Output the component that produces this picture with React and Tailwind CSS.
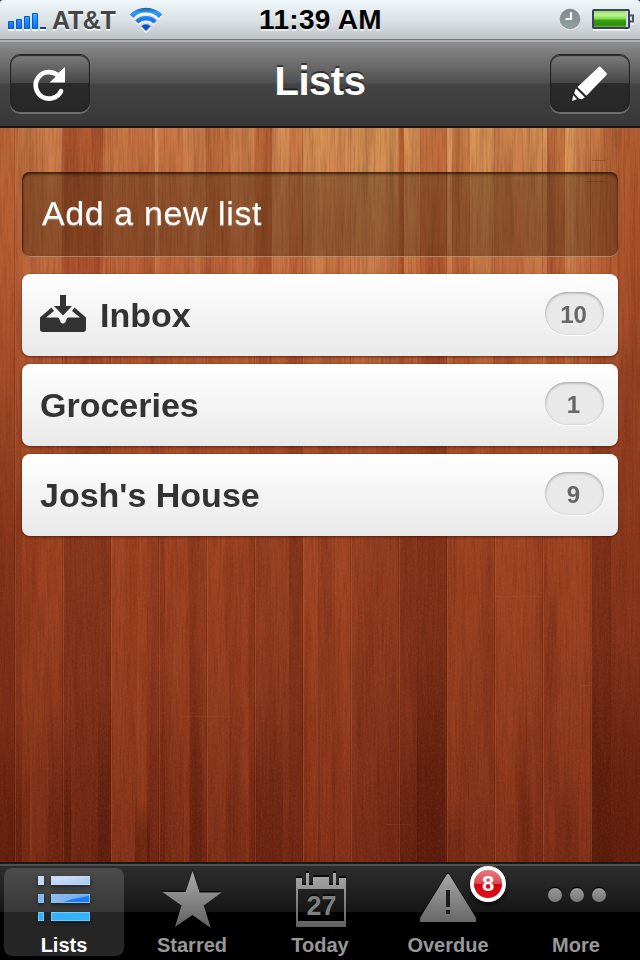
import React from "react";

// Wood strips: x, width, colour, opacity
const upperStrips = [
  [0, 15, "#a8481e", 0.3], [15, 7, "#a8481e", 0.1], [63, 40, "#8f2f12", 0.48], [103, 25, "#8f2f12", 0.12],
  [128, 27, "#8f2f12", 0.18], [155, 4, "#f4b67a", 0.35], [159, 24, "#a03a14", 0.16], [195, 12, "#f0b070", 0.12],
  [207, 24, "#a03a14", 0.22], [231, 24, "#f0b070", 0.06], [255, 17, "#a03a14", 0.38], [272, 17, "#f0b070", 0.18],
  [289, 14, "#a03a14", 0.15], [303, 20, "#e8b468", 0.34], [323, 28, "#e8b468", 0.16], [351, 5, "#f0be78", 0.26],
  [356, 24, "#e8b468", 0.36], [380, 19, "#e8b468", 0.24], [399, 5, "#97360f", 0.5], [404, 16, "#e8b468", 0.2],
  [420, 27, "#97360f", 0.3], [447, 5, "#f0be78", 0.42], [452, 18, "#97360f", 0.14], [470, 25, "#e8b468", 0.36],
  [495, 30, "#e8b468", 0.03], [525, 18, "#e8b468", 0.24], [543, 4, "#f0be78", 0.38], [547, 18, "#97360f", 0.22],
  [565, 11, "#f0be78", 0.34], [576, 16, "#e8b468", 0.08], [592, 8, "#97360f", 0.08], [600, 18, "#97360f", 0.2],
  [618, 22, "#97360f", 0.38],
];
const lowerStrips = [
  [0, 15, "#54180a", 0.22], [15, 7, "#54180a", 0.12], [22, 10, "#c5582a", 0.2], [32, 30, "#c5582a", 0.06],
  [63, 12, "#54180a", 0.16], [75, 36, "#54180a", 0.25], [111, 26, "#c5582a", 0.16], [137, 10, "#c5582a", 0.26],
  [151, 14, "#54180a", 0.1], [165, 24, "#c5582a", 0.18], [190, 16, "#54180a", 0.05], [207, 24, "#c5582a", 0.1],
  [231, 18, "#c5582a", 0.18], [249, 6, "#54180a", 0.14], [255, 32, "#54180a", 0.04], [289, 14, "#54180a", 0.22],
  [303, 15, "#c5582a", 0.18], [318, 14, "#54180a", 0.08], [335, 16, "#c5582a", 0.16], [351, 26, "#54180a", 0.04],
  [377, 22, "#54180a", 0.1], [399, 18, "#54180a", 0.22], [417, 30, "#54180a", 0.35], [447, 16, "#c5582a", 0.15],
  [463, 32, "#c5582a", 0.08], [495, 28, "#c5582a", 0.17], [523, 12, "#c5582a", 0.1], [543, 28, "#c5582a", 0.1],
  [571, 20, "#c5582a", 0.14], [591, 20, "#54180a", 0.4], [611, 29, "#54180a", 0.16],
];
const bottomPatches = [
  [48, 16, 690, "#3c1006", 0.22], [63, 8, 730, "#2c0a04", 0.4], [98, 13, 690, "#3c1006", 0.3], [135, 15, 800, "#3c1006", 0.35],
  [159, 25, 650, "#3c1006", 0.15], [190, 12, 640, "#3c1006", 0.22], [226, 20, 720, "#3c1006", 0.12], [255, 28, 690, "#3c1006", 0.22],
  [320, 12, 620, "#c5582a", 0.18], [399, 20, 740, "#3c1006", 0.22], [417, 28, 640, "#3c1006", 0.32], [447, 18, 800, "#3c1006", 0.18],
  [518, 14, 700, "#3c1006", 0.12], [555, 24, 760, "#3c1006", 0.15], [592, 48, 640, "#300b04", 0.35], [0, 30, 720, "#300b04", 0.25],
];
const seams = [15, 63, 111, 159, 207, 255, 303, 351, 399, 447, 495, 543, 591];

function Wood() {
  return (
    <svg className="absolute inset-0 h-full w-full" viewBox="0 128 640 734" preserveAspectRatio="none" aria-hidden="true">
      <defs>
        <linearGradient id="base" gradientUnits="userSpaceOnUse" x1="0" y1="128" x2="0" y2="862">
          <stop offset="0" stopColor="#cf834f" />
          <stop offset="0.1" stopColor="#c97647" />
          <stop offset="0.2" stopColor="#c26c41" />
          <stop offset="0.33" stopColor="#b25a34" />
          <stop offset="0.56" stopColor="#9c4424" />
          <stop offset="0.78" stopColor="#8e3b20" />
          <stop offset="1" stopColor="#782c18" />
        </linearGradient>
        <linearGradient id="fadeDown" gradientUnits="userSpaceOnUse" x1="0" y1="128" x2="0" y2="480">
          <stop offset="0" stopColor="#fff" />
          <stop offset="0.45" stopColor="#fff" stopOpacity="0.75" />
          <stop offset="1" stopColor="#fff" stopOpacity="0" />
        </linearGradient>
        <linearGradient id="fadeUp" gradientUnits="userSpaceOnUse" x1="0" y1="300" x2="0" y2="862">
          <stop offset="0" stopColor="#fff" stopOpacity="0" />
          <stop offset="0.4" stopColor="#fff" />
          <stop offset="1" stopColor="#fff" />
        </linearGradient>
        <linearGradient id="patchDark" x1="0" y1="0" x2="0" y2="1">
          <stop offset="0" stopColor="#3c1006" stopOpacity="0" />
          <stop offset="0.6" stopColor="#3c1006" />
        </linearGradient>
        <linearGradient id="patchLight" x1="0" y1="0" x2="0" y2="1">
          <stop offset="0" stopColor="#c5582a" stopOpacity="0" />
          <stop offset="0.5" stopColor="#c5582a" />
        </linearGradient>
        <radialGradient id="glow" gradientUnits="userSpaceOnUse" cx="400" cy="128" r="260" gradientTransform="translate(0 64) scale(1 0.5)">
          <stop offset="0" stopColor="#e8b870" stopOpacity="0.22" />
          <stop offset="1" stopColor="#e8b870" stopOpacity="0" />
        </radialGradient>
        <linearGradient id="sides" x1="0" y1="0" x2="1" y2="0">
          <stop offset="0" stopColor="#6e1c08" stopOpacity="0.12" />
          <stop offset="0.08" stopColor="#6e1c08" stopOpacity="0" />
          <stop offset="0.92" stopColor="#6e1c08" stopOpacity="0" />
          <stop offset="1" stopColor="#6e1c08" stopOpacity="0.14" />
        </linearGradient>
        <mask id="upper"><rect x="0" y="128" width="640" height="734" fill="url(#fadeDown)" /></mask>
        <mask id="lower"><rect x="0" y="128" width="640" height="734" fill="url(#fadeUp)" /></mask>
        <filter id="grain" x="0" y="0" width="1" height="1" colorInterpolationFilters="sRGB">
          <feTurbulence type="fractalNoise" baseFrequency="0.5 0.02" numOctaves="3" seed="8" />
          <feColorMatrix values="0 0 0 0 0.24  0 0 0 0 0.06  0 0 0 0 0.02  1.1 0 0 0 -0.42" />
        </filter>
        <filter id="broad" x="0" y="0" width="1" height="1" colorInterpolationFilters="sRGB">
          <feTurbulence type="fractalNoise" baseFrequency="0.07 0.004" numOctaves="2" seed="21" />
          <feColorMatrix values="0 0 0 0 0.28  0 0 0 0 0.06  0 0 0 0 0.02  0 1.4 0 0 -0.62" />
        </filter>
        <filter id="speck" x="0" y="0" width="1" height="1" colorInterpolationFilters="sRGB">
          <feTurbulence type="fractalNoise" baseFrequency="0.7 0.4" numOctaves="2" seed="3" />
          <feColorMatrix values="0 0 0 0 0.9  0 0 0 0 0.48  0 0 0 0 0.25  0 0 1.2 0 -0.5" />
        </filter>
      </defs>
      <rect x="0" y="128" width="640" height="734" fill="url(#base)" />
      <rect x="0" y="128" width="640" height="734" fill="url(#glow)" />
      <g mask="url(#upper)">
        {upperStrips.map(([x, w, c, o]) => (
          <rect key={x} x={x} y="128" width={w} height="400" fill={c} opacity={o} />
        ))}
      </g>
      <g mask="url(#lower)">
        {lowerStrips.map(([x, w, c, o]) => (
          <rect key={x} x={x} y="300" width={w} height="562" fill={c} opacity={o} />
        ))}
      </g>
      {bottomPatches.map(([x, w, y, c, o]) => (
        <rect key={x + "-" + y} x={x} y={y} width={w} height={862 - y} fill={c === "#c5582a" ? "url(#patchLight)" : "url(#patchDark)"} opacity={o} />
      ))}
      <rect x="0" y="128" width="640" height="734" filter="url(#broad)" opacity="0.35" />
      <rect x="0" y="128" width="640" height="734" filter="url(#grain)" opacity="0.36" />
      <rect x="0" y="128" width="640" height="734" filter="url(#speck)" opacity="0.2" />
      {seams.map((x) => (
        <g key={x}>
          <rect x={x - 1} y="128" width="1" height="734" fill="#3a0f04" opacity="0.14" />
          <rect x={x} y="128" width="1" height="734" fill="#d0703a" opacity="0.25" />
        </g>
      ))}
      <rect x="0" y="128" width="640" height="734" fill="url(#sides)" />
      <path d="M495 596.500H542M180 716.500H232M579 685.500H591M385 824.500H410" stroke="#cf6a38" strokeWidth="1" opacity="0.15" />
      <path d="M592 160.500H606M585 181.500H607" stroke="#5a2410" opacity="0.3" />
    </svg>
  );
}

function StatusBar() {
  return (
    <div className="relative flex h-10 shrink-0 items-center border-b border-[#6d7a80] bg-gradient-to-b from-[#f1f8fb] via-[#dbe3e7] to-[#bcc4c9]">
      <svg className="shrink-0" width="640" height="39" viewBox="0 0 640 39" aria-hidden="true">
        <defs>
          <linearGradient id="bars" gradientUnits="userSpaceOnUse" x1="0" y1="13" x2="0" y2="29">
            <stop offset="0" stopColor="#2fb4fb" />
            <stop offset="1" stopColor="#0a6cf2" />
          </linearGradient>
          <linearGradient id="wifi" gradientUnits="userSpaceOnUse" x1="0" y1="8" x2="0" y2="31">
            <stop offset="0" stopColor="#1f5fae" />
            <stop offset="0.2" stopColor="#2f9df2" />
            <stop offset="0.6" stopColor="#1d6ff0" />
            <stop offset="1" stopColor="#0440c0" />
          </linearGradient>
          <linearGradient id="battery" x1="0" y1="0" x2="0" y2="1">
            <stop offset="0" stopColor="#8fe35a" />
            <stop offset="0.25" stopColor="#c0f596" />
            <stop offset="0.48" stopColor="#7fd94a" />
            <stop offset="0.6" stopColor="#35a00d" />
            <stop offset="0.85" stopColor="#2f8d07" />
            <stop offset="1" stopColor="#5fb530" />
          </linearGradient>
          <linearGradient id="clock" x1="0" y1="0" x2="0" y2="1">
            <stop offset="0" stopColor="#7d8b8e" />
            <stop offset="1" stopColor="#93a09f" />
          </linearGradient>
        </defs>
        <path d="M0 0H3Q0 0 0 3ZM640 0H637Q640 0 640 3Z" fill="#222" />
        <path d="M8 30H14M16 30H22M24 30H30M32 30H38M40 30H46" stroke="#fff" strokeWidth="2" />
        <g fill="url(#bars)" stroke="#0b57cf">
          <path d="M8.500 21.500h5v7h-5zM16.500 19.500h5v9h-5zM24.500 16.500h5v12h-5zM32.500 13.500h5v15h-5z" />
        </g>
        <rect x="40" y="27" width="6" height="2" fill="#1240b8" />
        <g fill="none" stroke="#fff">
          <path d="M131.500 18a20.500 20.500 0 0 1 29 0" strokeWidth="4.800" />
          <path d="M136.800 23.500a13 13 0 0 1 18.400 0" strokeWidth="4.800" />
          <path d="M142 28a6 6 0 0 1 8 0L146 32Z" strokeWidth="1.500" />
        </g>
        <g fill="none" stroke="url(#wifi)">
          <path d="M131.500 16.200a20.500 20.500 0 0 1 29 0" strokeWidth="4.800" />
          <path d="M136.800 22a13 13 0 0 1 18.400 0" strokeWidth="4.500" />
        </g>
        <path d="M141.300 26.300a6.700 6.700 0 0 1 9.400 0L146 31Z" fill="#0c4fce" />
        <circle cx="570" cy="20" r="10" fill="#fff" />
        <circle cx="570" cy="19" r="10" fill="url(#clock)" stroke="#6f7c80" strokeWidth="0.500" />
        <path d="M571 12V19H565.500" stroke="#fff" strokeWidth="2.200" fill="none" />
        <path d="M593 29.500H630M631 23.500h3" stroke="#fff" strokeWidth="2" />
        <rect x="593" y="10" width="36" height="18" rx="1" fill="#d8dce0" stroke="#3d4162" strokeWidth="2" />
        <path d="M630 15.500h3v6h-3" fill="none" stroke="#4a5270" strokeWidth="2" />
        <rect x="594" y="11" width="32" height="16" fill="url(#battery)" />
      </svg>
      <span className="absolute left-[52px] top-[4px] text-[25px] font-bold leading-8 tracking-[-0.3px] text-[#464646] [text-shadow:0_2px_0_rgba(255,255,255,.7)]">AT&amp;T</span>
      <span className="absolute left-0 top-[4px] w-[641px] text-center text-[28px] font-bold leading-8 tracking-[0.3px] text-black [text-shadow:0_2px_0_rgba(255,255,255,.6)]">11:39 AM</span>
    </div>
  );
}

function HeaderButton({ label, children }) {
  return (
    <button
      aria-label={label}
      className="h-[58px] w-20 rounded-[10px] border border-[#262626] bg-[linear-gradient(#7d7d7d_0%,#454545_50%,#2a2a2a_51%,#282828_100%)] shadow-[0_2px_0_rgba(255,255,255,.25),inset_0_1px_1px_rgba(0,0,0,.7)]"
    >
      {children}
    </button>
  );
}

function Header() {
  return (
    <header className="flex h-[88px] shrink-0 items-start justify-between border-b-2 border-[#16191b] bg-[linear-gradient(#b0b0b0_0px,#b0b0b0_2px,#8c8c8c_2px,#505050_43px,#444_44px,#383838_100%)] px-[10px] pt-[14px]">
      <HeaderButton label="Refresh">
        <svg width="78" height="56" viewBox="11 55 78 56" aria-hidden="true">
          <path d="M57 74.700A13.300 13.300 0 1 0 61 91.200" fill="none" stroke="#fff" strokeWidth="4.700" strokeLinecap="round" />
          <path d="M65 67V82.500H49.500L55 77.500L57 74Z" fill="#fff" />
        </svg>
      </HeaderButton>
      <h1 className="pt-[4px] text-[40px] font-bold leading-[46px] tracking-[-0.500px] text-white [text-shadow:0_-2px_0_rgba(0,0,0,.5)]">Lists</h1>
      <HeaderButton label="Edit">
        <svg width="78" height="56" viewBox="551 55 78 56" aria-hidden="true">
          <g fill="#fff">
            <path d="M598.500 67.200Q599.700 66 600.900 67.200L606.300 72.800Q607.500 74 606.300 75.200L586.400 95.700L577.500 87Z" />
            <path d="M576 88.600L584.800 97.300L582 99.200L578.800 98.400L574.300 93.600L574.800 91Z" />
            <path d="M573.300 95.300L577 99.200L572 101Z" />
          </g>
        </svg>
      </HeaderButton>
    </header>
  );
}

function ListRow({ name, count, icon }) {
  return (
    <li className="flex h-[82px] items-center rounded-lg bg-gradient-to-b from-white to-[#e9e9e9] pl-[18px] pr-[14px] shadow-[0_1px_3px_rgba(50,10,0,.65)]">
      {icon}
      <span className="grow text-[34px] font-bold leading-10 text-[#333]">{name}</span>
      <span className="mb-[3px] flex h-[43px] w-[59px] items-center justify-center rounded-full bg-[#e9e9e9] pr-[2px] pt-[2px] text-[24px] font-bold text-[#666] shadow-[inset_0_1px_3px_rgba(0,0,0,.35),0_1px_0_#fff]">
        {count}
      </span>
    </li>
  );
}

const inboxIcon = (
  <svg className="mr-[14px] mb-[2px] shrink-0" width="46" height="38" viewBox="40 295 46 38" aria-hidden="true">
    <path d="M60 295h6v11h6l-9 9.500l-9-9.500h6z" fill="#333" />
    <path d="M40 317.500L51.500 307.500L54 311L46 317.500H57.500C60.500 317.500 59 323.500 63 323.500S65.500 317.500 68.500 317.500H80L72 311L74.500 307.500L86 317.500V329Q86 332 83 332H43Q40 332 40 329Z" fill="#333" />
  </svg>
);

const lists = [
  { name: "Inbox", count: 10, icon: inboxIcon },
  { name: "Groceries", count: 1 },
  { name: "Josh's House", count: 9 },
];

const listsIcon = (
  <svg width="128" height="62" viewBox="0 868 128 62" aria-hidden="true">
    <defs>
      <linearGradient id="rowA" x1="0" y1="0" x2="1" y2="1"><stop offset="0" stopColor="#d9e5f8" /><stop offset="1" stopColor="#a6c3f0" /></linearGradient>
      <linearGradient id="rowB" x1="0" y1="0" x2="1" y2="0"><stop offset="0" stopColor="#8fbcf0" /><stop offset="1" stopColor="#6ea6ec" /></linearGradient>
    </defs>
    <path d="M38 878h6v9h-6zM51 878h39v9H51zM38 896h6v9h-6zM51 896h39v9H51zM38 914h6v9h-6zM51 914h39v9H51z" className="fill-black/50 blur-[2px]" />
    <g stroke="#c3d9fa">
      <rect x="38.500" y="876.500" width="5" height="8" fill="#c9d9f5" />
      <rect x="51.500" y="876.500" width="38" height="8" fill="url(#rowA)" />
    </g>
    <g stroke="#7fc0fb">
      <rect x="38.500" y="894.500" width="5" height="8" fill="#86b6ee" />
      <rect x="51.500" y="894.500" width="38" height="8" fill="url(#rowB)" />
    </g>
    <path d="M63 902Q75 898 89 896V902Z" fill="#1c7cf0" />
    <g stroke="#5fd0ff" fill="#35b0fa">
      <rect x="38.500" y="912.500" width="5" height="8" />
      <rect x="51.500" y="912.500" width="38" height="8" />
    </g>
  </svg>
);

const starIcon = (
  <svg width="128" height="62" viewBox="128 868 128 62" aria-hidden="true">
    <defs>
      <linearGradient id="gray" gradientUnits="userSpaceOnUse" x1="0" y1="870" x2="0" y2="928"><stop offset="0" stopColor="#adadad" /><stop offset="1" stopColor="#5f5f5f" /></linearGradient>
    </defs>
    <path d="M192.500 869.500L185.500 890.500H162.500L181.500 904L175 925.500L192.500 913.500L210.800 926.500L203.800 904L221.500 891H199.700Z" fill="#000" opacity="0.55" />
    <path d="M192.500 871L185.500 892H162.500L181.500 905.500L175 927L192.500 915L210.800 928L203.800 905.500L221.500 892.500H199.700Z" fill="url(#gray)" />
  </svg>
);

const calendarIcon = (
  <div className="relative h-[62px] w-32">
    <svg width="128" height="62" viewBox="256 868 128 62" aria-hidden="true">
      <path d="M296 876h6v7h4v-12h3v12h4v-8h16v8h4v-12h3v12h3v-7h7v10h-50z" fill="#000" opacity="0.7" />
      <path fillRule="evenodd" d="M296 878h6v7h4v-12h3v12h4v-8h16v8h4v-12h3v12h3v-7h7v49h-50zM298 889v32h46v-32z" fill="url(#gray)" />
    </svg>
    <span className="absolute left-0 top-[22px] w-[131px] text-center text-[27px] font-bold leading-8 text-[#808080] [text-shadow:0_-2px_0_rgba(0,0,0,.6)]">27</span>
  </div>
);

const overdueIcon = (
  <div className="relative h-[62px] w-32">
    <svg width="128" height="62" viewBox="384 868 128 62" aria-hidden="true">
      <path d="M446.500 873.500Q448 871 449.500 873.500L475.500 916V920H420V916Z" fill="#000" opacity="0.6" />
      <path d="M446.500 875Q448 872.500 449.500 875L475.500 917Q476 918 476 922H420Q420 918 420.500 917Z" fill="url(#gray)" />
      <path d="M446 890h4v17h-4zM446 910h4v4h-4z" fill="#1c1c1c" />
    </svg>
    <span className="absolute left-[86px] top-[-2px] flex size-9 items-center justify-center rounded-full border-[4px] border-white bg-[linear-gradient(#e77a80_0%,#e04850_48%,#d8000f_52%,#e00d1c_100%)] bg-clip-padding text-[22px] font-bold leading-none text-white shadow-[0_3px_4px_rgba(0,0,0,.7)]">8</span>
  </div>
);

const moreIcon = (
  <svg width="128" height="62" viewBox="512 868 128 62" aria-hidden="true">
    <defs>
      <linearGradient id="dot" x1="0" y1="0" x2="0" y2="1"><stop offset="0" stopColor="#9a9a9a" /><stop offset="1" stopColor="#787878" /></linearGradient>
    </defs>
    {[555, 577, 599].map((x) => (
      <g key={x}>
        <circle cx={x} cy="893.500" r="7" fill="#000" opacity="0.7" />
        <circle cx={x} cy="895" r="7" fill="url(#dot)" />
      </g>
    ))}
  </svg>
);

const tabs = [
  { label: "Lists", icon: listsIcon, active: true },
  { label: "Starred", icon: starIcon },
  { label: "Today", icon: calendarIcon },
  { label: "Overdue", icon: overdueIcon },
  { label: "More", icon: moreIcon },
];

function TabBar() {
  return (
    <nav className="grid h-[98px] shrink-0 grid-cols-5 bg-[linear-gradient(#17191a_0px,#17191a_2px,#555_2px,#4a4a4a_4px,#2e2e2e_4px,#161616_50px,#000_50px,#000_100%)] pt-[6px]">
      {tabs.map((t) => (
        <div key={t.label} className={t.active ? "mx-1 flex h-[88px] flex-col items-center rounded-lg bg-white/15" : "flex h-[88px] flex-col items-center"}>
          <div className="-mx-1 w-32 shrink-0 [&>svg]:block">{t.icon}</div>
          <span className={t.active ? "pt-[4px] text-[20px] font-bold leading-[23px] text-white" : "pt-[4px] text-[20px] font-bold leading-[23px] text-[#989898]"}>{t.label}</span>
        </div>
      ))}
    </nav>
  );
}

export default function App() {
  return (
    <div className="flex h-[960px] w-[640px] flex-col overflow-hidden bg-black font-['Liberation_Sans',Arial,sans-serif]">
      <StatusBar />
      <Header />
      <main className="relative grow overflow-hidden">
        <Wood />
        <div className="relative px-[22px] pt-[44px]">
          <div className="flex h-[85px] items-center rounded-lg bg-[#40280f]/40 pb-[3px] pl-[20px] shadow-[inset_0_2px_3px_rgba(30,10,0,.75),inset_1px_0_2px_rgba(30,10,0,.4),inset_0_-1px_0_rgba(255,225,200,.55)]">
            <span className="text-[34px] leading-10 tracking-[0.6px] text-white [text-shadow:0_1px_1px_rgba(200,225,235,.6)]">Add a new list</span>
          </div>
          <ul className="mt-[17px] flex flex-col gap-2">
            {lists.map((l) => (
              <ListRow key={l.name} {...l} />
            ))}
          </ul>
        </div>
      </main>
      <TabBar />
    </div>
  );
}
